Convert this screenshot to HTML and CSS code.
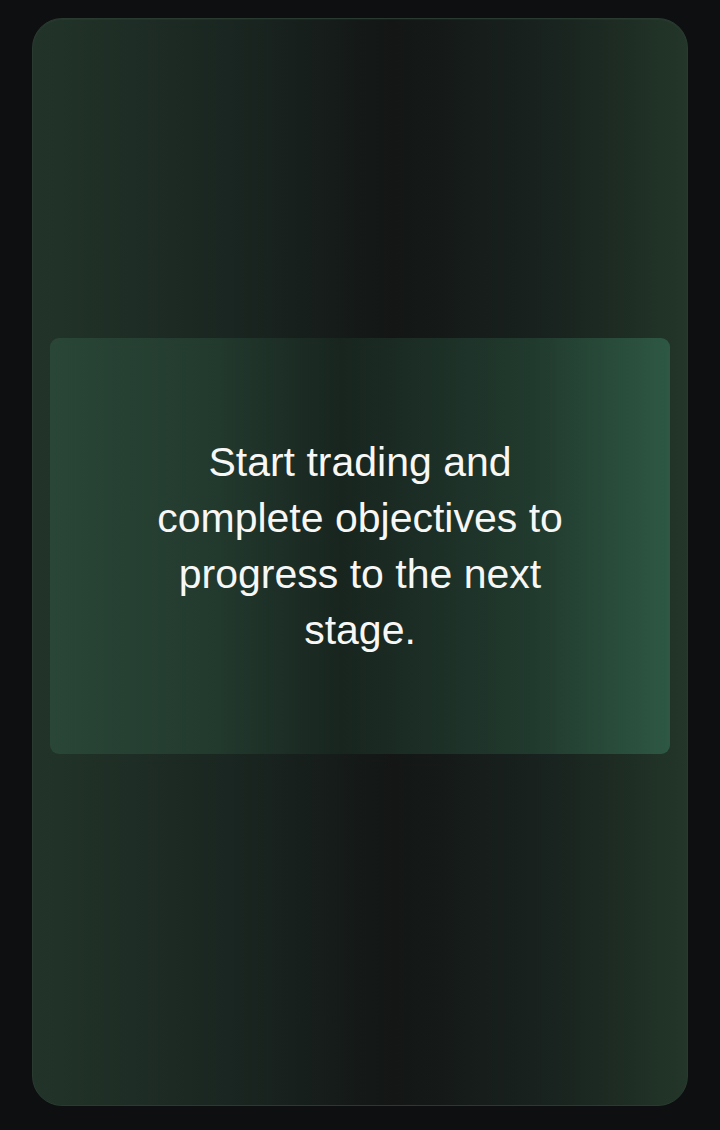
FILE: index.html
```html
<!DOCTYPE html>
<html lang="en">
<head>
  <meta charset="UTF-8">
  <meta name="viewport" content="width=device-width, initial-scale=1.0">
  <title>Stage Progress</title>
  <link rel="stylesheet" href="styles.css">
</head>
<body>

<div id="stageCard">
  <div id="stagePanel">
    <p class="stage-message">Start trading and complete objectives to progress to the next stage.</p>
  </div>
</div>

</body>
</html>
```

FILE: styles.css
```css
body {
  margin: 0;
  padding: 18px 32px 24px;
  background-color: #0e0f11;
  font-family: 'Liberation Sans', Arial, sans-serif;
  color: #f6f7f6;
}
#stageCard {
  height: 1088px;
  box-sizing: border-box;
  padding: 319px 17px 0;
  border: 1px solid #293b31;
  border-radius: 30px;
  background: linear-gradient(90deg, #223429 0%, #1a2621 30%, #131615 55%, #19231f 80%, #233629 100%);
  box-shadow: inset 0 1px 0 rgba(255, 255, 255, 0.03);
}
#stagePanel {
  height: 416px;
  display: flex;
  align-items: center;
  justify-content: center;
  border-radius: 9px;
  background: linear-gradient(90deg, #294636 0%, #233b2f 25%, #18251f 47%, #213a2e 78%, #2e5843 100%);
}
.stage-message {
  margin: 0;
  max-width: 450px;
  text-align: center;
  font-size: 41px;
  line-height: 56px;
}
```
